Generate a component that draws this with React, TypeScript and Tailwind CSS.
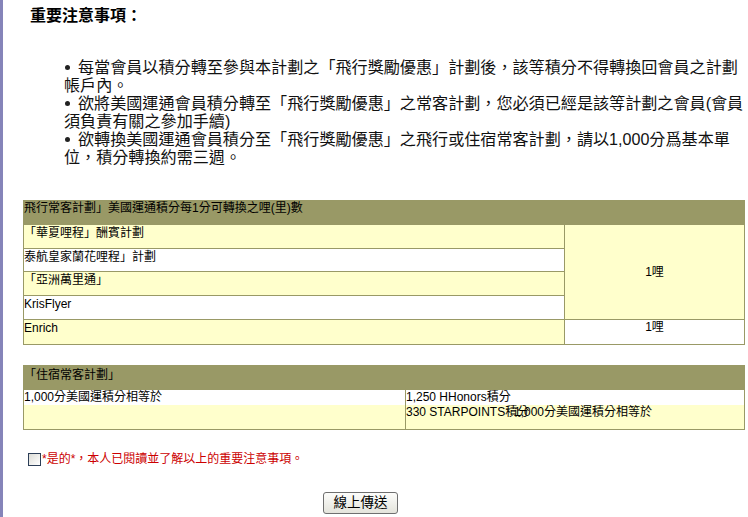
import React from "react";

const font = { fontFamily: '"Liberation Sans", "Noto Sans CJK TC", sans-serif' };

function Bullet() {
  return (
    <span className="inline-flex w-[14px] h-[18px] align-top items-center">
      <span className="ml-[1px] w-[5px] h-[5px] rounded-full bg-[#222]" />
    </span>
  );
}

export default function App() {
  return (
    <div
      className="w-[748px] h-[517px] bg-white overflow-hidden flex text-black"
      style={font}
    >
      <div className="w-[3px] shrink-0 bg-[#8584b9]" />
      <div className="flex-1 flex flex-col">
        <div className="pt-[7px] pl-[27px] text-[16px] font-bold leading-[18px]">
          重要注意事項：
        </div>

        <div className="mt-[33px] pl-[61px] text-[16.1px] leading-[18px] whitespace-nowrap text-[#111]">
          <div>
            <Bullet />
            每當會員以積分轉至參與本計劃之「飛行獎勵優惠」計劃後，該等積分不得轉換回會員之計劃
          </div>
          <div>帳戶內。</div>
          <div>
            <Bullet />
            欲將美國運通會員積分轉至「飛行獎勵優惠」之常客計劃，您必須已經是該等計劃之會員(會員
          </div>
          <div>須負責有關之參加手續)</div>
          <div>
            <Bullet />
            欲轉換美國運通會員積分至「飛行獎勵優惠」之飛行或住宿常客計劃，請以1,000分爲基本單
          </div>
          <div>位，積分轉換約需三週。</div>
        </div>

        {/* Table 1 */}
        <div className="mt-[34px] ml-[20px] w-[722px] text-[12px] leading-[15px]">
          <div className="h-[25px] bg-[#999966] pt-[1px] pl-[1px]">
            飛行常客計劃」美國運通積分每1分可轉換之哩(里)數
          </div>
          <div className="grid grid-cols-[541px_181px] grid-rows-[24px_23px_24px_24px_25px]">
            <div className="col-start-1 row-start-1 bg-[#ffffcc] border-l border-b border-[#999966] pt-[1px]">
              「華夏哩程」酬賓計劃
            </div>
            <div className="col-start-1 row-start-2 bg-white border-l border-b border-[#999966] pt-[1px]">
              泰航皇家蘭花哩程」計劃
            </div>
            <div className="col-start-1 row-start-3 bg-[#ffffcc] border-l border-b border-[#999966] pt-[1px]">
              「亞洲萬里通」
            </div>
            <div className="col-start-1 row-start-4 bg-white border-l border-b border-[#999966] pt-[1px]">
              KrisFlyer
            </div>
            <div className="col-start-1 row-start-5 bg-[#ffffcc] border-l border-b border-[#999966] pt-[1px]">
              Enrich
            </div>
            <div className="col-start-2 row-start-1 row-span-4 bg-[#ffffcc] border-l border-r border-b border-[#999966] flex items-center justify-center">
              1哩
            </div>
            <div className="col-start-2 row-start-5 bg-white border-l border-r border-b border-[#999966] text-center">
              1哩
            </div>
          </div>
        </div>

        {/* Table 2 */}
        <div className="mt-[20px] ml-[20px] w-[722px] text-[12px] leading-[15px]">
          <div className="h-[25px] bg-[#999966] pt-[3px] pl-[1px]">「住宿常客計劃」</div>
          <div className="grid grid-cols-[382px_338px] grid-rows-[15px_24px] border-l border-r border-b border-[#999966]">
            <div className="col-start-1 row-start-1 bg-white border-r border-[#999966]">
              1,000分美國運積分相等於
            </div>
            <div className="col-start-2 row-start-1 bg-white">1,250 HHonors積分</div>
            <div className="col-start-1 row-start-2 bg-[#ffffcc] border-r border-[#999966]" />
            <div className="col-start-2 row-start-2 bg-[#ffffcc] relative">
              330 STARPOINTS積分
              <span className="absolute left-[108px] top-0">1,000分美國運積分相等於</span>
            </div>
          </div>
        </div>

        {/* Checkbox */}
        <div className="mt-[22px] ml-[25px] flex items-center h-[14px]">
          <div className="w-[13px] h-[13px] border border-[#2c3e57] bg-gradient-to-br from-[#dcdcd6] to-white" />
          <span className="ml-[1px] text-[12px] leading-[14px] text-[#cc0000]">
            *是的*，本人已閱讀並了解以上的重要注意事項。
          </span>
        </div>

        {/* Button */}
        <div className="mt-[24px] ml-[320px]">
          <button className="w-[75px] h-[22px] border border-[#6f6f6f] rounded-[3px] bg-gradient-to-b from-[#fdfdfb] to-[#e4e4dc] text-[13.5px] leading-[18px] text-black">
            線上傳送
          </button>
        </div>
      </div>
    </div>
  );
}
